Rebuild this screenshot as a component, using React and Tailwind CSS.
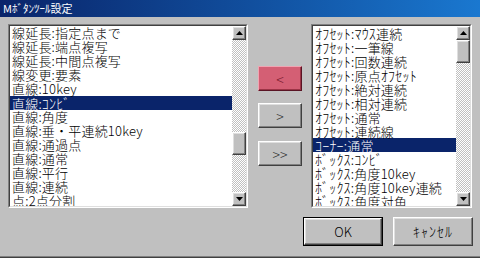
import React from 'react'

const LEFT = [
  '線延長:指定点まで',
  '線延長:端点複写',
  '線延長:中間点複写',
  '線変更:要素',
  '直線:10key',
  '直線:ｺﾝﾋﾞ',
  '直線:角度',
  '直線:垂・平連続10key',
  '直線:通過点',
  '直線:通常',
  '直線:平行',
  '直線:連続',
  '点:2点分割',
]

const RIGHT = [
  'ｵﾌｾｯﾄ:ﾏｳｽ連続',
  'ｵﾌｾｯﾄ:一筆線',
  'ｵﾌｾｯﾄ:回数連続',
  'ｵﾌｾｯﾄ:原点ｵﾌｾｯﾄ',
  'ｵﾌｾｯﾄ:絶対連続',
  'ｵﾌｾｯﾄ:相対連続',
  'ｵﾌｾｯﾄ:通常',
  'ｵﾌｾｯﾄ:連続線',
  'ｺｰﾅｰ:通常',
  'ﾎﾞｯｸｽ:ｺﾝﾋﾞ',
  'ﾎﾞｯｸｽ:角度10key',
  'ﾎﾞｯｸｽ:角度10key連続',
  'ﾎﾞｯｸｽ:角度対角',
]

const raised =
  'bg-[#c0c0c0] border border-t-white border-l-white border-r-[#404040] border-b-[#404040] shadow-[inset_-1px_-1px_#808080,inset_1px_1px_#dfdfdf]'

// half-width kana runs get a slightly bigger size so they read like the old UI font
function Label({ text }) {
  return text.split(/([\uFF61-\uFF9F]+)/).map((part, i) =>
    /[\uFF61-\uFF9F]/.test(part) ? (
      <span key={i} className="text-[14px]">{part}</span>
    ) : (
      part
    )
  )
}

function Arrow({ down }) {
  return (
    <svg width="7" height="4" viewBox="0 0 7 4" className={down ? 'rotate-180' : ''}>
      <path d="M3.5 0 L7 4 L0 4 Z" fill="#000" />
    </svg>
  )
}

function ScrollBar({ before }) {
  return (
    <div className="w-[14px] flex flex-col shrink-0">
      <div className={`h-[14px] flex items-center justify-center ${raised}`}>
        <Arrow />
      </div>
      <div className="flex-1 flex flex-col bg-[image:repeating-conic-gradient(#c0c0c0_0%_25%,#ffffff_0%_50%)] bg-[length:2px_2px]">
        <div style={{ height: before }} />
        <div className={`h-[23px] ${raised}`} />
      </div>
      <div className={`h-[14px] flex items-center justify-center ${raised}`}>
        <Arrow down />
      </div>
    </div>
  )
}

function ListBox({ items, selected, width, thumb }) {
  return (
    <div
      className={`${width} h-[184px] flex border border-t-[#808080] border-l-[#808080] border-r-white border-b-white`}
    >
      <div className="flex-1 flex border border-t-[#404040] border-l-[#404040] border-r-[#dfdfdf] border-b-[#dfdfdf] bg-white">
        <div className="flex-1 overflow-hidden">
          {items.map((t, i) => (
            <div
              key={t}
              className={`h-[14px] leading-[14px] pl-[2px] text-[13px] tracking-[0.2px] font-light whitespace-nowrap ${
                i === selected ? 'bg-[#0a246a] text-white' : 'text-black'
              }`}
            >
              <Label text={t} />
            </div>
          ))}
        </div>
        <ScrollBar before={thumb} />
      </div>
    </div>
  )
}

function MoveButton({ label, red }) {
  return (
    <button
      className={`w-[44px] h-[25px] flex items-center justify-center text-[14px] font-light leading-none ${
        red
          ? 'bg-[#d45f74] text-[#7a1a2e] border border-t-[#f0a4b2] border-l-[#f0a4b2] border-r-[#5a1424] border-b-[#5a1424] shadow-[inset_-1px_-1px_#9c3446]'
          : `${raised} text-[#303030]`
      }`}
    >
      {label}
    </button>
  )
}

export default function App() {
  return (
    <div className="w-[480px] h-[258px] bg-[#c0c0c0] flex flex-col font-['Noto_Sans_CJK_JP',sans-serif] border-b border-b-[#404040] shadow-[inset_0_-1px_#808080] select-none">
      {/* title bar */}
      <div className="h-[17px] shrink-0 flex items-center pl-[3px] bg-gradient-to-r from-[#0a246a] to-[#1a78d0] text-white text-[11px] leading-none">
        Mﾎﾞﾀﾝﾂｰﾙ設定
      </div>

      <div className="flex pl-[8px] pt-[7px]">
        <ListBox items={LEFT} selected={5} width="w-[240px]" thumb={92} />

        <div className="flex flex-col ml-[10px] mr-[9px] pt-[42px]">
          <MoveButton label="<" red />
          <div className="mt-[12px]">
            <MoveButton label=">" />
          </div>
          <div className="mt-[13px]">
            <MoveButton label=">>" />
          </div>
        </div>

        <ListBox items={RIGHT} selected={8} width="w-[161px]" thumb={0} />
      </div>

      <div className="flex justify-end gap-[10px] pr-[7px] pt-[9px]">
        <button className="w-[80px] h-[29px] border border-black flex">
          <span className={`flex-1 flex items-center justify-center text-[13px] font-light text-black ${raised}`}>
            OK
          </span>
        </button>
        <button className={`w-[80px] h-[29px] flex items-center justify-center text-[14px] tracking-[1px] font-light text-black ${raised}`}>
          ｷｬﾝｾﾙ
        </button>
      </div>
    </div>
  )
}
